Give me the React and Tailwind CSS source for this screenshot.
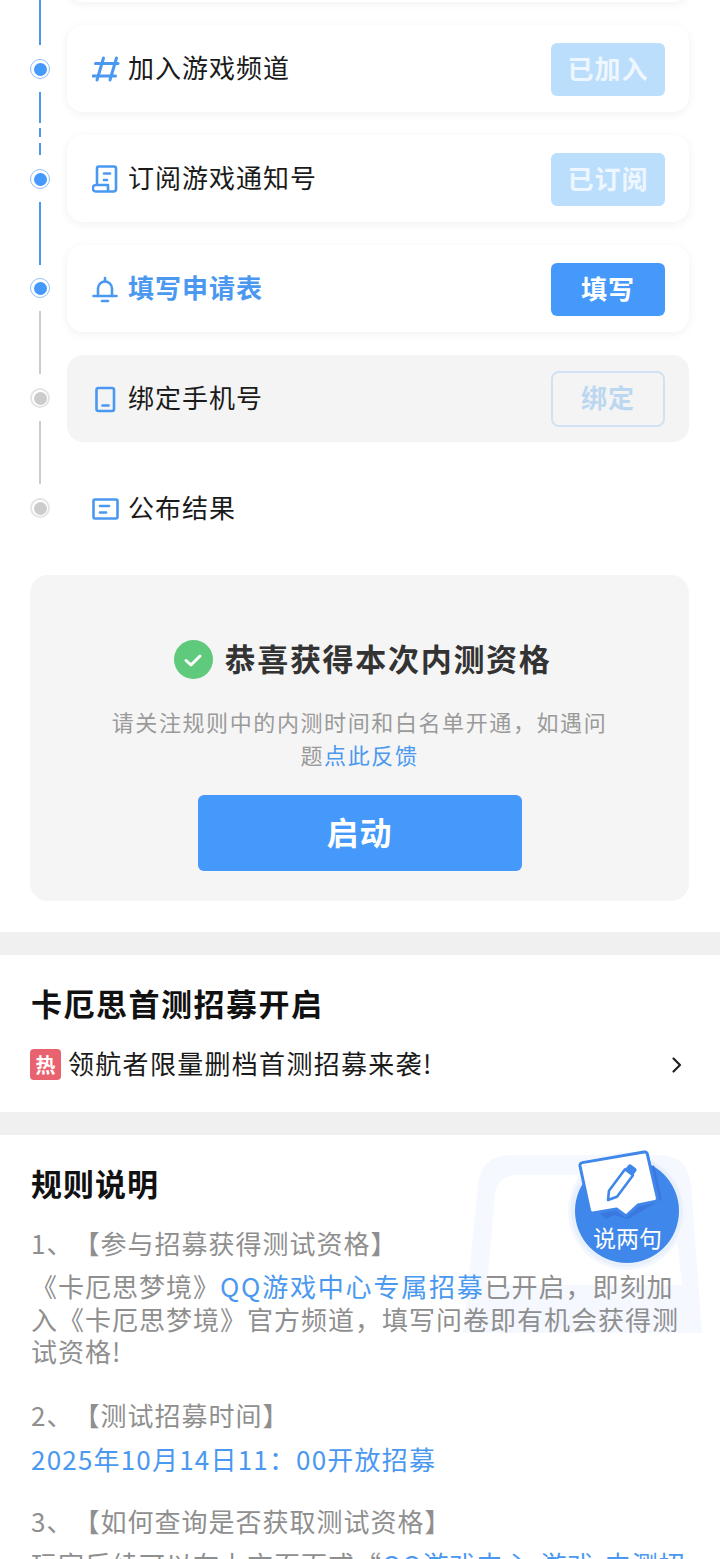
import React from 'react';

const font = { fontFamily: '"Noto Sans CJK SC", "Noto Sans", sans-serif' };

const steps = [
  { label: '加入游戏频道', icon: 'hash', button: '已加入', kind: 'done' },
  { label: '订阅游戏通知号', icon: 'scroll', button: '已订阅', kind: 'done' },
  { label: '填写申请表', icon: 'bell', button: '填写', kind: 'active' },
  { label: '绑定手机号', icon: 'phone', button: '绑定', kind: 'locked' },
  { label: '公布结果', icon: 'card', kind: 'plain' },
];

function StepIcon({ name }) {
  const common = { width: 28, height: 28, viewBox: '0 0 28 28', fill: 'none', stroke: '#4a98f0', strokeWidth: 2.6, strokeLinecap: 'round', strokeLinejoin: 'round' };
  if (name === 'hash') {
    return (
      <svg {...common} strokeWidth="3">
        <path d="M11.500 3 5 25" />
        <path d="M24.500 3 18 25" />
        <path d="M3.500 8.500H26" />
        <path d="M1 21h22.500" />
      </svg>
    );
  }
  if (name === 'scroll') {
    return (
      <svg {...common}>
        <path d="M5 20V3.500a2 2 0 0 1 2-2h15a2 2 0 0 1 2 2V24a2.500 2.500 0 0 1-2.500 2.500H4a3.200 3.200 0 0 1 0-6.500H16v6.500" />
        <path d="M12 8.500h6" />
        <path d="M12 15h3" />
      </svg>
    );
  }
  if (name === 'bell') {
    return (
      <svg {...common}>
        <path d="M1.500 21h23" />
        <path d="M6 21v-7.500a7 7 0 0 1 14 0V21" />
        <path d="M13 3v3" />
        <path d="M10 26h6" />
      </svg>
    );
  }
  if (name === 'phone') {
    return (
      <svg {...common}>
        <rect x="4.500" y="3" width="17.500" height="23" rx="2" />
        <path d="M10.500 20.500h6" />
      </svg>
    );
  }
  return (
    <svg {...common}>
      <rect x="1.500" y="4.500" width="24" height="19" rx="1.500" />
      <path d="M8 11h9" />
      <path d="M8 17.500h6" />
    </svg>
  );
}

function Dot({ on }) {
  return (
    <div className={`flex h-[20px] w-[20px] shrink-0 items-center justify-center rounded-full bg-white ${on ? 'border border-[#8fc0f5]' : 'border-2 border-[#e4e4e4]'}`}>
      <div className={`h-[13px] w-[13px] rounded-full ${on ? 'bg-[#4499fb]' : 'bg-[#cccccc]'}`} />
    </div>
  );
}

function Timeline() {
  return (
    <div className="flex w-[20px] shrink-0 flex-col items-center">
      <div className="h-[45px] w-[2px] bg-[#4a98f0]" />
      <div className="mt-[14px]"><Dot on /></div>
      <div className="mt-[13px] h-[31px] w-[2px] bg-[#4a98f0]" />
      <div className="mt-[5px] h-[9px] w-[2px] bg-[#4a98f0]" />
      <div className="mt-[6px] h-[12px] w-[2px] bg-[#4a98f0]" />
      <div className="mt-[14px]"><Dot on /></div>
      <div className="mt-[13px] h-[63px] w-[2px] bg-[#4a98f0]" />
      <div className="mt-[13px]"><Dot on /></div>
      <div className="mt-[13px] h-[63px] w-[2px] bg-[#cccccc]" />
      <div className="mt-[14px]"><Dot /></div>
      <div className="mt-[13px] h-[63px] w-[2px] bg-[#cccccc]" />
      <div className="mt-[14px]"><Dot /></div>
    </div>
  );
}

function StepRow({ step }) {
  const shell = {
    done: 'bg-white shadow-[0_2px_10px_rgba(0,0,0,0.06)]',
    active: 'bg-white shadow-[0_2px_10px_rgba(0,0,0,0.06)]',
    locked: 'bg-[#f4f4f4]',
    plain: '',
  };
  const btn = {
    done: 'mt-[2px] h-[53px] rounded-[6px] bg-[#bcdefd] text-[#eef7ff] font-semibold',
    active: 'mt-[2px] h-[53px] rounded-[6px] bg-[#4499fb] text-white font-bold',
    locked: 'h-[56px] rounded-[8px] border-2 border-[#cfe3f5] text-[#bcd8f0] font-semibold',
  };
  return (
    <div className={`flex h-[87px] items-center justify-between rounded-[16px] pl-[25px] pr-[24px] ${shell[step.kind]}`}>
      <div className="flex items-center gap-[8px]">
        <StepIcon name={step.icon} />
        <span className={`pb-[4px] text-[26px] leading-none tracking-[1px] ${step.kind === 'active' ? 'font-bold text-[#4a98f0]' : 'text-[#1a1a1a]'}`}>{step.label}</span>
      </div>
      {step.button && (
        <div className={`flex w-[114px] items-center justify-center pb-[5px] text-[26px] tracking-[1px] ${btn[step.kind]}`}>{step.button}</div>
      )}
    </div>
  );
}

function Feedback() {
  return (
    <div className="absolute left-[566px] top-[12px] h-[125px] w-[130px]">
      <svg width="130" height="125" viewBox="0 0 130 125" fill="none">
        <circle cx="61" cy="64" r="59" fill="#f4f8fe" />
        <circle cx="61" cy="64" r="56" fill="#e8f0fc" />
        <circle cx="61" cy="64" r="52" fill="#3f87ea" />
        <path d="M28 60 88 18 96 52 62 72 48 68 40 72z" fill="#3a74dc" opacity="0.8" />
        <path d="M14 19a3 3 0 0 1 2.400-3.400L78 5a3 3 0 0 1 3.400 2.300l10 43.500a3 3 0 0 1-2.300 3.600L72 58 60 69 50.500 62 27 66a3 3 0 0 1-3.400-2.300z" fill="#ffffff" stroke="#3f87ea" strokeWidth="3" strokeLinejoin="round" />
        <path d="M42 53 43 43.700 59 22.300 67 28.300 51 49.700z" fill="#ffffff" stroke="#3f87ea" strokeWidth="2.600" strokeLinejoin="round" />
        <path d="M59 22.300 62 18.500a2.500 2.500 0 0 1 3.500-.5l4 3a2.500 2.500 0 0 1 .5 3.500L67 28.300z" fill="#3f87ea" />
      </svg>
      <span className="absolute left-[27px] top-[79px] text-[23px] leading-none text-white">说两句</span>
    </div>
  );
}

function Watermark() {
  return (
    <svg className="absolute left-[460px] top-[20px]" width="250" height="178" viewBox="0 0 250 178">
      <path
        fillRule="evenodd"
        fill="#f5f8fe"
        d="M3 178 18 30Q21 0 52 0H198Q228 0 231 30L242 178ZM27 130 35 40Q37 20 57 20H190Q210 20 212 40L222 130Z"
      />
    </svg>
  );
}

function RuleHead({ children, className = '' }) {
  return <p className={`text-[26px] leading-[33px] tracking-[1px] text-[#8f8f8f] ${className}`}>{children}</p>;
}

export default function App() {
  return (
    <div className="h-[1559px] w-[720px] overflow-hidden bg-white [text-spacing-trim:space-all]" style={font}>
      <div className="flex items-start gap-[17px] pl-[30px] pr-[31px]">
        <Timeline />
        <div className="-mt-[85px] flex flex-1 flex-col gap-[23px]">
          <div className="h-[87px] rounded-[16px] bg-white shadow-[0_2px_10px_rgba(0,0,0,0.06)]" />
          {steps.map((s) => <StepRow key={s.label} step={s} />)}
        </div>
      </div>

      <div className="mx-[30px] mt-[23px] flex h-[326px] w-[659px] flex-col items-center rounded-[18px] bg-[#f5f5f5] pt-[65px]">
        <div className="flex items-center gap-[12px] pl-[6px]">
          <div className="flex h-[39px] w-[39px] items-center justify-center rounded-full bg-[#5fc97c]">
            <svg width="22" height="22" viewBox="0 0 22 22" fill="none" stroke="#ffffff" strokeWidth="3" strokeLinecap="round" strokeLinejoin="round"><path d="M4 11.500 9 16 18 7" /></svg>
          </div>
          <span className="pb-[4px] text-[31px] font-bold leading-none tracking-[1.700px] text-[#333333]">恭喜获得本次内测资格</span>
        </div>
        <p className="mt-[26px] w-[500px] text-center text-[22px] leading-[33px] tracking-[1.600px] text-[#9a9a9a]">
          请关注规则中的内测时间和白名单开通，如遇问题<span className="text-[#4a98f0]">点此反馈</span>
        </p>
        <div className="mt-[24px] flex h-[76px] w-[324px] items-center justify-center rounded-[6px] bg-[#4499fb] pb-[5px] text-[32px] font-semibold tracking-[1px] text-white">启动</div>
      </div>

      <div className="mt-[31px] h-[23px] bg-[#f0f0f0]" />

      <div className="h-[157px] px-[30px] pt-[28px]">
        <h2 className="pl-[1px] text-[31px] font-bold leading-[40px] tracking-[1.500px] text-[#111111]">卡厄思首测招募开启</h2>
        <div className="mt-[26px] flex items-center">
          <span className="flex h-[31px] w-[31px] items-center justify-center rounded-[4px] bg-[#e8636f] text-[20px] font-bold text-white">热</span>
          <span className="ml-[7px] pb-[4px] text-[26px] leading-none tracking-[1.300px] text-[#1a1a1a]">领航者限量删档首测招募来袭!</span>
          <svg className="ml-auto mr-[7px]" width="12" height="18" viewBox="0 0 12 18" fill="none" stroke="#222222" strokeWidth="2.200" strokeLinecap="round" strokeLinejoin="round"><path d="M2.500 2.500 9 9l-6.500 6.500" /></svg>
        </div>
      </div>

      <div className="h-[23px] bg-[#f0f0f0]" />

      <div className="relative px-[31px] pt-[28px]">
        <Watermark />
        <h2 className="relative text-[31px] font-bold leading-[40px] tracking-[1px] text-[#111111]">规则说明</h2>
        <div className="relative">
          <RuleHead className="mt-[23px]">1、【参与招募获得测试资格】</RuleHead>
          <p className="mt-[11px] text-[26px] leading-[32.500px] tracking-[1px] text-[#8f8f8f]">
            《卡厄思梦境》<span className="tracking-[1.800px] text-[#4a98f0]">QQ游戏中心专属招募</span>已开启，即刻加入《卡厄思梦境》官方频道，填写问卷即有机会获得测试资格!
          </p>
          <RuleHead className="mt-[30px]">2、【测试招募时间】</RuleHead>
          <p className="mt-[11px] text-[26px] leading-[33px] tracking-[1.200px] text-[#4a98f0]">2025年10月14日11：00开放招募</p>
          <RuleHead className="mt-[29px]">3、【如何查询是否获取测试资格】</RuleHead>
          <p className="mt-[10px] text-[26px] leading-[33px] tracking-[1px] text-[#8f8f8f]">
            玩家后续可以在上方页面或“<span className="text-[#4a98f0]">QQ游戏中心-游戏-内测招募</span>”查看
          </p>
        </div>
        <Feedback />
      </div>
    </div>
  );
}
